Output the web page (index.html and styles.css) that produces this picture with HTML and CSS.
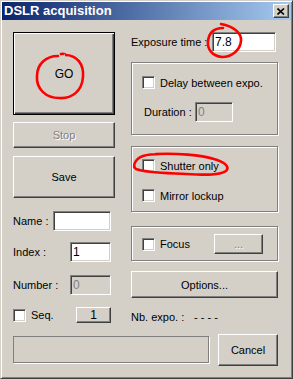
FILE: index.html
```html
<!DOCTYPE html>
<html lang="en">
<head>
    <meta charset="UTF-8">
    <title>DSLR acquisition</title>
    <link rel="stylesheet" href="styles.css">
</head>
<body>
    <div class="window">
        <div class="titlebar">
            <span class="title">DSLR acquisition</span>
            <span class="close">
                <svg width="8" height="7" viewBox="0 0 8 7"><path d="M0.5 0.5 L7 6.5 M7 0.5 L0.5 6.5" stroke="#000" stroke-width="1.6"/></svg>
            </span>
        </div>

        <div class="client">
            <div class="cols">
                <div class="left">
                    <button class="btn default go">GO</button>
                    <button class="btn stop" disabled>Stop</button>
                    <button class="btn save">Save</button>

                    <div class="row name-row">
                        <span class="lbl name-lbl">Name :</span>
                        <input class="field name-field" type="text" value="">
                    </div>
                    <div class="row index-row">
                        <span class="lbl num-lbl">Index :</span>
                        <input class="field num-field" type="text" value="1">
                    </div>
                    <div class="row number-row">
                        <span class="lbl num-lbl">Number :</span>
                        <input class="field num-field" type="text" value="0" disabled>
                    </div>
                    <div class="row seq-row">
                        <span class="check"></span>
                        <span class="check-lbl">Seq.</span>
                        <button class="btn seq-btn">1</button>
                    </div>
                </div>

                <div class="right">
                    <div class="row expo-row">
                        <span class="lbl">Exposure time :</span>
                        <input class="field expo-field" type="text" value="7.8">
                    </div>

                    <div class="group delay-group">
                        <div class="check-row">
                            <span class="check"></span>
                            <span class="check-lbl">Delay between expo.</span>
                        </div>
                        <div class="row duration-row">
                            <span class="lbl duration-lbl">Duration :</span>
                            <input class="field duration-field" type="text" value="0" disabled>
                        </div>
                    </div>

                    <div class="group shutter-group">
                        <div class="check-row">
                            <span class="check"></span>
                            <span class="check-lbl">Shutter only</span>
                        </div>
                        <div class="check-row mirror-row">
                            <span class="check"></span>
                            <span class="check-lbl">Mirror lockup</span>
                        </div>
                    </div>

                    <div class="group focus-group">
                        <div class="row focus-row">
                            <span class="check"></span>
                            <span class="check-lbl">Focus</span>
                            <button class="btn dots-btn" disabled>...</button>
                        </div>
                    </div>

                    <button class="btn options">Options...</button>

                    <div class="row nb-row">
                        <span class="lbl nb-lbl">Nb. expo. :</span>
                        <span class="lbl">- - - -</span>
                    </div>
                </div>
            </div>

            <div class="bottom">
                <div class="progress"></div>
                <button class="btn cancel">Cancel</button>
            </div>
        </div>

        <svg class="marks" width="293" height="379" viewBox="0 0 293 379">
            <path d="M60 53 C63 52 66 54 64 54 C76 54 83 63 82 76 C81 90 71 98 58 97 C45 97 35 88 36 75 C36 63 45 55 57 55" />
            <path d="M220 23 C232 25 241 32 240 40 C239 50 230 56 221 56 C211 55 206 48 207 40 C208 32 213 27 222 27" />
            <path d="M155 153 C175 152 200 154 213 158 C224 161 229 166 225 170 C218 175 200 174 185 173 C165 172 145 172 135 168 C131 165 134 158 142 155 C148 153 152 153 160 153" />
        </svg>
    </div>
</body>
</html>
```

FILE: styles.css
```css
* {
    box-sizing: border-box;
}
body {
    margin: 0;
    font-family: "Liberation Sans", Arial, sans-serif;
    font-size: 11px;
    color: #000;
}
.window {
    position: relative;
    width: 293px;
    height: 379px;
    padding: 1px;
    background-color: #d4d0c8;
    border: 1px solid;
    border-color: #d4d0c8 #404040 #404040 #d4d0c8;
    box-shadow: inset 1px 1px #fff, inset -1px -1px #808080;
}
.titlebar {
    display: flex;
    justify-content: space-between;
    align-items: flex-start;
    height: 18px;
    padding: 0 2px 0 2px;
    background: linear-gradient(to right, #0a246a, #a6caf0);
}
.title {
    color: #fff;
    font-weight: bold;
    font-size: 13px;
    line-height: 18px;
}
.close {
    display: flex;
    align-items: center;
    justify-content: center;
    width: 16px;
    height: 14px;
    margin-top: 2px;
    background-color: #d4d0c8;
    border: 1px solid;
    border-color: #fff #404040 #404040 #fff;
    box-shadow: inset -1px -1px #808080;
}
.client {
    padding: 12px 0 0 11px;
}
.cols {
    display: flex;
    align-items: flex-start;
    gap: 16px;
}
.left {
    display: flex;
    flex-direction: column;
    width: 102px;
}
.right {
    display: flex;
    flex-direction: column;
    width: 147px;
}
.btn {
    display: block;
    margin: 0;
    padding: 0;
    font: inherit;
    color: #000;
    background-color: #d4d0c8;
    border: 1px solid;
    border-color: #fff #404040 #404040 #fff;
    box-shadow: inset -1px -1px #808080;
}
.btn:disabled {
    color: #808080;
    text-shadow: 1px 1px #fff;
}
.btn.default {
    border: 1px solid #000;
    box-shadow: inset 1px 1px #fff, inset -1px -1px #404040, inset -2px -2px #808080;
}
.go {
    height: 83px;
    font-size: 12px;
}
.stop {
    height: 26px;
    margin-top: 7px;
}
.save {
    height: 42px;
    margin-top: 8px;
}
.row {
    display: flex;
    align-items: center;
}
.lbl {
    white-space: nowrap;
}
.field {
    height: 20px;
    margin: 0;
    padding: 0 2px;
    font: inherit;
    font-size: 12px;
    color: #000;
    background-color: #fff;
    border: 1px solid;
    border-color: #808080 #fff #fff #808080;
    box-shadow: inset 1px 1px #404040, inset -1px -1px #d4d0c8;
    outline: none;
}
.field:disabled {
    color: #808080;
    background-color: #d4d0c8;
}
.name-row {
    height: 20px;
    margin-top: 13px;
}
.name-lbl {
    width: 40px;
}
.name-field {
    width: 58px;
}
.num-lbl {
    width: 57px;
}
.num-field {
    width: 41px;
}
.index-row {
    height: 20px;
    margin-top: 11px;
}
.number-row {
    height: 20px;
    margin-top: 13px;
}
.seq-row {
    height: 16px;
    margin-top: 12px;
}
.seq-btn {
    width: 35px;
    height: 16px;
    margin-left: auto;
    margin-right: 4px;
    font-size: 12px;
}
.check {
    display: block;
    flex: none;
    width: 13px;
    height: 13px;
    background-color: #fff;
    border: 1px solid;
    border-color: #808080 #fff #fff #808080;
    box-shadow: inset 1px 1px #404040, inset -1px -1px #d4d0c8;
}
.check-lbl {
    margin-left: 5px;
    white-space: nowrap;
}
.check-row {
    display: flex;
    align-items: center;
    height: 13px;
}
.expo-row {
    height: 20px;
}
.expo-field {
    width: 64px;
    margin-left: auto;
    margin-right: 2px;
}
.group {
    border: 1px solid #808080;
    box-shadow: inset 1px 1px #fff, 1px 1px #fff;
    padding-left: 10px;
}
.delay-group {
    height: 73px;
    margin-top: 10px;
    padding-top: 13px;
}
.duration-row {
    height: 20px;
    margin-top: 13px;
}
.duration-lbl {
    width: 53px;
    padding-left: 2px;
}
.duration-field {
    width: 38px;
}
.shutter-group {
    height: 66px;
    margin-top: 11px;
    padding-top: 12px;
}
.mirror-row {
    margin-top: 17px;
}
.focus-group {
    height: 35px;
    margin-top: 14px;
    padding-top: 7px;
}
.focus-row {
    height: 20px;
}
.dots-btn {
    width: 49px;
    height: 20px;
    margin-left: auto;
    margin-right: 14px;
}
.options {
    height: 27px;
    margin-top: 10px;
}
.nb-row {
    height: 16px;
    margin-top: 11px;
}
.nb-lbl {
    width: 63px;
}
.bottom {
    display: flex;
    align-items: flex-start;
    margin-top: 9px;
}
.progress {
    width: 196px;
    height: 27px;
    margin-top: 2px;
    border: 1px solid #808080;
    box-shadow: 1px 1px #fff;
}
.cancel {
    width: 60px;
    height: 32px;
    margin-left: 9px;
}
.marks {
    position: absolute;
    top: 0;
    left: 0;
    pointer-events: none;
}
.marks path {
    fill: none;
    stroke: #f00;
    stroke-width: 2.6;
    stroke-linecap: round;
}
```
